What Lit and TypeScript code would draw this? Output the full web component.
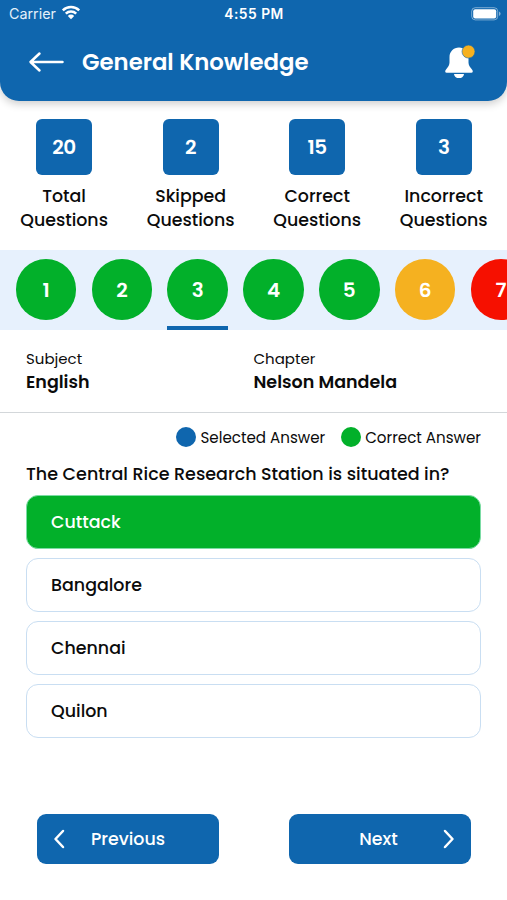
import { LitElement, html, css, svg } from "lit";
import { customElement } from "lit/decorators.js";
import { classMap } from "lit/directives/class-map.js";

const STATS = [
  { value: "20", label: "Total" },
  { value: "2", label: "Skipped" },
  { value: "15", label: "Correct" },
  { value: "3", label: "Incorrect" },
];

const QUESTIONS = ["green", "green", "green", "green", "green", "amber", "red"];
const CURRENT = 3;
const OPTIONS = ["Cuttack", "Bangalore", "Chennai", "Quilon"];
const ANSWER = "Cuttack";

const wifiIcon = svg`<svg class="wifi" width="20" height="15" viewBox="0 0 20 15">
  <path d="M1.8 5.3a11.8 11.8 0 0 1 16.4 0M4.8 8.6a7.5 7.5 0 0 1 10.4 0" fill="none" stroke="currentColor" stroke-width="2.5"/>
  <path d="M10 14.2l-3.2-3.3a4.6 4.6 0 0 1 6.4 0z" fill="currentColor"/>
</svg>`;

const batteryIcon = svg`<svg class="battery" width="30" height="14" viewBox="0 0 30 14">
  <rect x="0.7" y="0.7" width="26" height="12.2" rx="3.6" fill="none" stroke="#fff" stroke-opacity=".45" stroke-width="1"/>
  <rect x="2.2" y="2.2" width="23" height="9.2" rx="2" fill="#fff"/>
  <path d="M28 4.6v4.4q1.6-.7 1.6-2.2T28 4.6z" fill="#fff" fill-opacity=".5"/>
</svg>`;

const backIcon = svg`<svg class="back" width="36" height="22" viewBox="0 0 36 22">
  <path d="M11.500 2.500L2.500 11l9 8.500M2.800 11h31.700" fill="none" stroke="#fff" stroke-width="2.500" stroke-linecap="round" stroke-linejoin="round"/>
</svg>`;

const bellIcon = svg`<svg class="bell" width="32" height="34" viewBox="0 0 32 34">
  <path d="M15 2.400C9.600 2.400 5.500 6.500 5.500 12v5.500c0 2.400-1.300 4.500-3.300 6.800C.6 26.200 1 27.700 2.700 27.700h24.600c1.700 0 2.100-1.500.500-3.400-2-2.300-3.300-4.400-3.300-6.800V12C24.500 6.500 20.400 2.400 15 2.400z" fill="#fff"/>
  <path d="M10 29.100h10a5 4 0 0 1-10 0z" fill="#fff"/>
  <circle cx="24.500" cy="6.600" r="6.500" fill="#f6b11f" stroke="#0f66ae" stroke-width=".6"/>
</svg>`;

const chevron = (d: string) => svg`<svg width="12" height="20" viewBox="0 0 12 20">
  <path d=${d} fill="none" stroke="#fff" stroke-width="2.500" stroke-linecap="round" stroke-linejoin="round"/>
</svg>`;

@customElement("app-root")
export class AppRoot extends LitElement {
  static styles = css`
    :host {
      display: flex;
      flex-direction: column;
      height: 900px;
      overflow: hidden;
      background: #fff;
      color: #0b0b0b;
      font-family: Poppins, Inter, "Noto Sans", sans-serif;
      font-weight: 500;
      white-space: nowrap;
    }
    * { box-sizing: border-box; }
    svg { display: block; flex: none; }
    .header {
      flex: none;
      height: 100.500px;
      background: #0f66ae;
      color: #fff;
      border-radius: 0 0 19px 19px;
      box-shadow: 0 3px 8px rgba(0, 0, 0, 0.2);
    }
    .status {
      display: grid;
      grid-template-columns: 1fr auto 1fr;
      align-items: center;
      height: 27px;
      padding: 0 6px 0 9px;
      font-family: Inter, sans-serif;
    }
    .carrier { display: flex; align-items: center; gap: 5.500px; font-weight: 400; font-size: 14.300px; color: #e4f0fa; }
    .wifi { color: #fff; margin-top: -2px; }
    .time { font-weight: 600; font-size: 13.800px; letter-spacing: 0.500px; margin-left: -2px; }
    .battery { justify-self: end; }
    .bar { display: flex; align-items: center; height: 69px; padding: 0 31px 0 28px; }
    .title { margin-left: 18px; flex: 1; font-size: 22.800px; font-weight: 600; }
    .stats { display: grid; grid-template-columns: repeat(4, 1fr); padding-left: 0.800px; margin-top: 18.500px; height: 131.300px; flex: none; }
    .stat { display: flex; flex-direction: column; align-items: center; }
    .stat-value {
      display: grid; place-items: center;
      width: 56px; height: 56px; margin-bottom: 9px;
      border-radius: 6px; background: #0f66ae; color: #fff;
      font-size: 20px; font-weight: 600; letter-spacing: -0.300px;
    }
    .stat-line { font-size: 17.400px; line-height: 24px; }
    .strip {
      display: flex; gap: 15.200px; flex: none;
      height: 79.400px; padding: 9.200px 0 0 15.900px;
      background: #e7f1fd; overflow: hidden;
    }
    .question-tab { display: flex; flex-direction: column; justify-content: space-between; flex: none; width: 60.600px; }
    .dot { display: grid; place-items: center; height: 60.600px; border-radius: 50%; color: #fff; font-size: 20px; font-weight: 600; }
    .green { background: #02b02a; }
    .amber { background: #f5b120; }
    .red { background: #f61000; }
    .underline { height: 3.500px; }
    .current .underline { background: #0f66ae; }
    .info {
      display: grid; grid-template-columns: 1fr 1fr; flex: none;
      height: 83px; padding: 17.500px 26px 0; border-bottom: 1px solid #d3d7da;
    }
    .info-label { font-size: 15px; line-height: 23px; font-weight: 400; }
    .info-value { font-size: 17.500px; line-height: 24px; font-weight: 600; }
    .legend { display: flex; justify-content: flex-end; align-items: center; gap: 15.500px; flex: none; height: 48px; padding: 1px 26px 0; font-size: 15.120px; font-weight: 400; }
    .key { display: flex; align-items: center; gap: 4px; }
    .swatch { width: 20.500px; height: 20.500px; border-radius: 50%; }
    .blue { background: #0f66ae; }
    .prompt { margin-left: 26px; height: 34.200px; line-height: 26px; font-size: 17.500px; flex: none; }
    .options { display: flex; flex-direction: column; gap: 9.300px; padding: 0 26px; flex: none; }
    .option {
      height: 53.800px; line-height: 52px; padding-left: 24px;
      border: 1.300px solid #c9def2; border-radius: 12px; font-size: 17.450px;
    }
    .option.right { background: #02b02a; border-color: #7cdca5; color: #fff; }
    .nav { display: flex; justify-content: space-between; padding: 0 36px 0 37px; margin-top: 75.600px; flex: none; }
    .button {
      display: grid; align-items: center; grid-template-columns: 12px 1fr 12px;
      width: 182px; height: 50px; padding: 0 16px; border-radius: 9px;
      background: #0f66ae; color: #fff; font-size: 17.400px; text-align: center;
    }
    .next { padding-right: 3px; }
  `;

  render() {
    return html`
      <header class="header">
        <div class="status">
          <div class="carrier"><span>Carrier</span>${wifiIcon}</div>
          <span class="time">4:55 PM</span>
          ${batteryIcon}
        </div>
        <div class="bar">${backIcon}<span class="title">General Knowledge</span>${bellIcon}</div>
      </header>
      <section class="stats">
        ${STATS.map((s) => html`
          <div class="stat">
            <div class="stat-value">${s.value}</div>
            <span class="stat-line">${s.label}</span>
            <span class="stat-line">Questions</span>
          </div>`)}
      </section>
      <nav class="strip">
        ${QUESTIONS.map((color, i) => html`
          <div class=${classMap({ "question-tab": true, current: i + 1 === CURRENT })}>
            <div class="dot ${color}">${i + 1}</div>
            <div class="underline"></div>
          </div>`)}
      </nav>
      <section class="info">
        <div><div class="info-label">Subject</div><div class="info-value">English</div></div>
        <div><div class="info-label">Chapter</div><div class="info-value">Nelson Mandela</div></div>
      </section>
      <div class="legend">
        <div class="key"><span class="swatch blue"></span><span>Selected Answer</span></div>
        <div class="key"><span class="swatch green"></span><span>Correct Answer</span></div>
      </div>
      <div class="prompt">The Central Rice Research Station is situated in?</div>
      <div class="options">
        ${OPTIONS.map((o) => html`<div class=${classMap({ option: true, right: o === ANSWER })}>${o}</div>`)}
      </div>
      <div class="nav">
        <div class="button">${chevron("M10 2L2.500 10l7.500 8")}<span>Previous</span><i></i></div>
        <div class="button"><i></i><span class="next">Next</span>${chevron("M2 2L9.500 10L2 18")}</div>
      </div>
    `;
  }
}
